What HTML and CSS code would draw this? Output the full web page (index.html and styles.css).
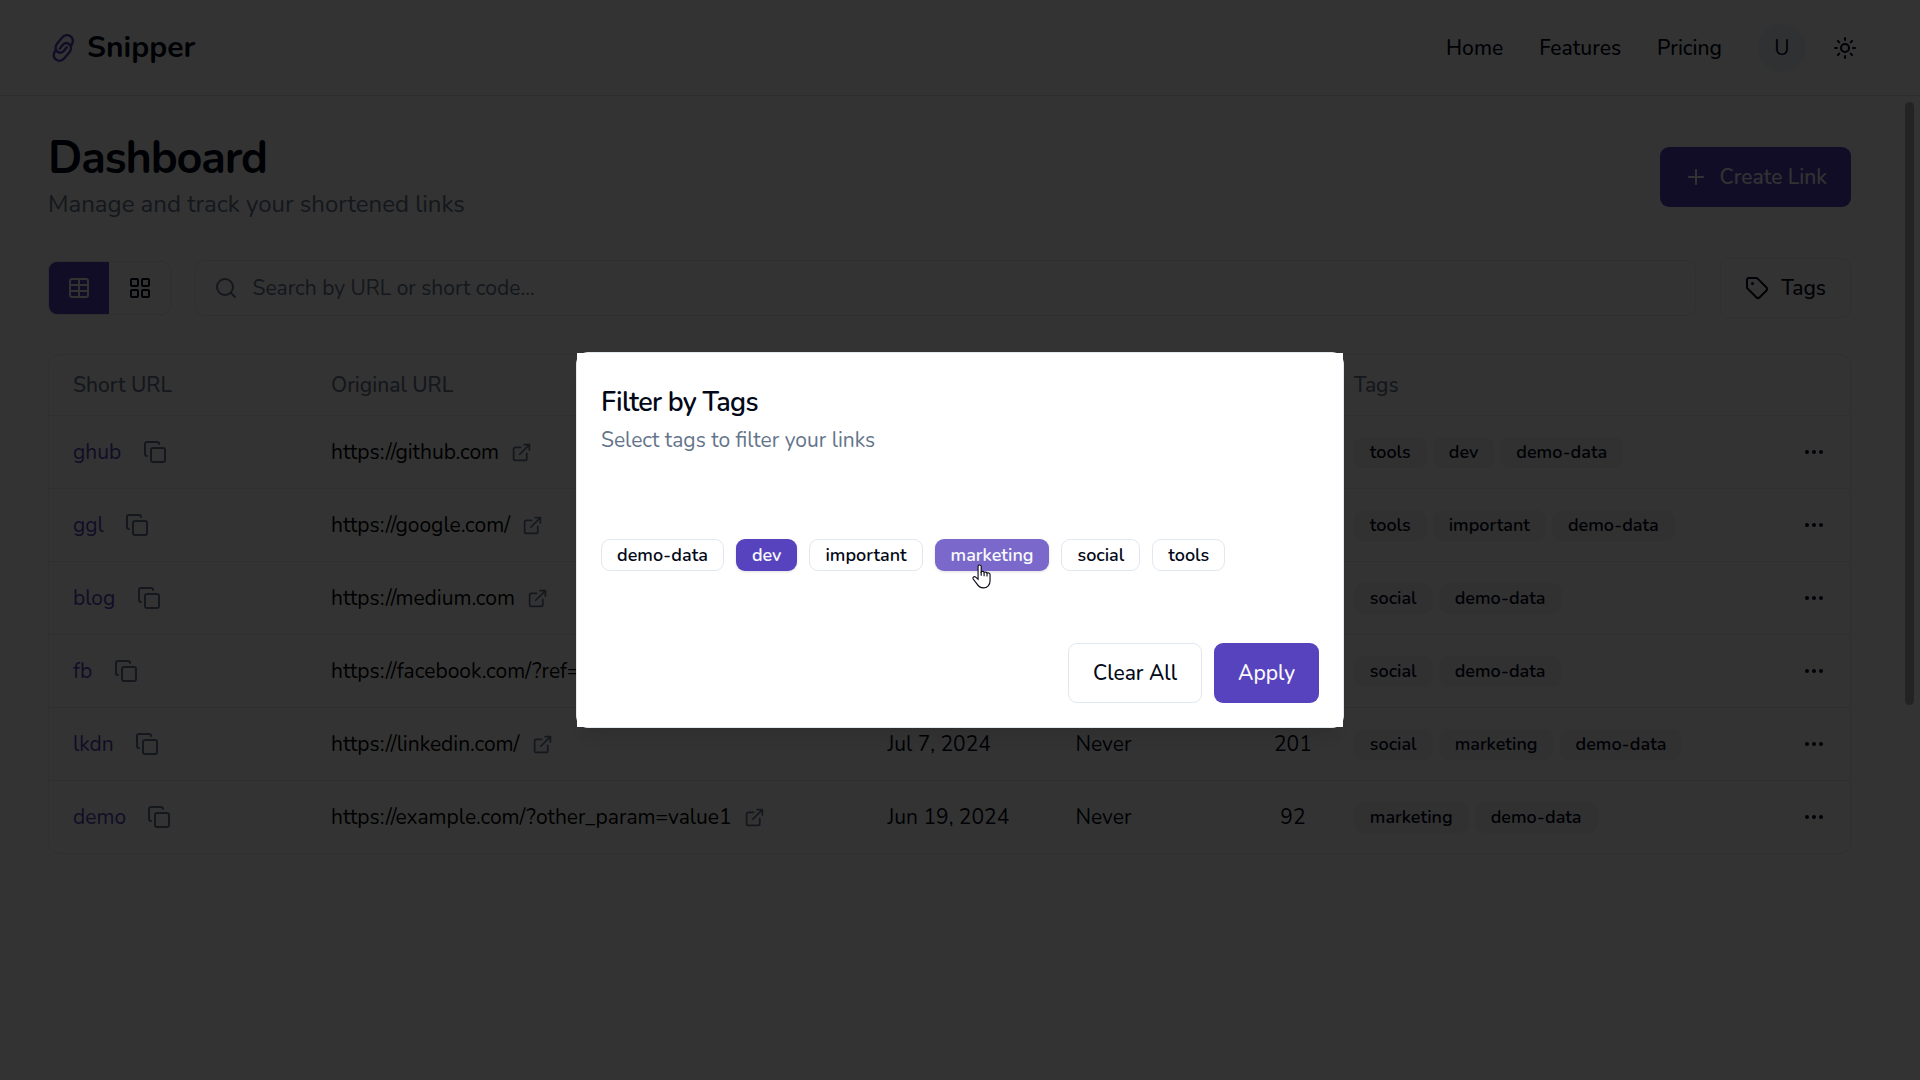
FILE: index.html
```html
<!DOCTYPE html>
<html lang="en">
<head>
<meta charset="utf-8">
<title>Snipper</title>
<link rel="stylesheet" href="styles.css">
</head>
<body>
<svg class="sprite" aria-hidden="true">
  <symbol id="copy" viewBox="0 0 24 24"><rect width="14" height="14" x="8" y="8" rx="2"/><path d="M4 16c-1.1 0-2-.9-2-2V4c0-1.1.9-2 2-2h10c1.1 0 2 .9 2 2"/></symbol>
  <symbol id="external" viewBox="0 0 24 24"><path d="M15 3h6v6M10 14 21 3M18 13v6a2 2 0 0 1-2 2H5a2 2 0 0 1-2-2V8a2 2 0 0 1 2-2h6"/></symbol>
  <symbol id="dots" viewBox="0 0 24 24"><circle cx="12" cy="12" r="1"/><circle cx="19" cy="12" r="1"/><circle cx="5" cy="12" r="1"/></symbol>
</svg>

<header class="topbar">
  <a class="brand">
    <svg class="icon brand-icon" viewBox="0 0 30 30"><path id="ring" d="M23.4 12.2C25.5 8.5 25 5 22.5 3.2C19.800 1.300 16.300 2 14 4.800L9 10.800C6.800 13.500 7.200 17 9.500 18.800C12 20.600 14.500 19.800 16.500 17.300L18.800 14.200"/><use href="#ring" transform="rotate(180 15.3 14.9)"/></svg>
    <span>Snipper</span>
  </a>
  <nav class="nav">
    <a>Home</a><a>Features</a><a>Pricing</a>
    <span class="avatar">U</span>
    <svg class="icon sun" viewBox="0 0 24 24"><circle cx="12" cy="12" r="4"/><path d="M12 2v2M12 20v2M4.93 4.93l1.41 1.41M17.66 17.66l1.41 1.41M2 12h2M20 12h2M6.34 17.66l-1.41 1.41M19.07 4.93l-1.41 1.41"/></svg>
  </nav>
</header>

<main class="page">
  <section class="heading">
    <div>
      <h1>Dashboard</h1>
      <p>Manage and track your shortened links</p>
    </div>
    <button class="btn primary create">
      <svg class="icon" viewBox="0 0 24 24"><path d="M5 12h14M12 5v14"/></svg>Create Link
    </button>
  </section>

  <section class="toolbar">
    <div class="views">
      <span class="view active"><svg class="icon" viewBox="0 0 24 24"><path d="M12 3v18"/><rect width="18" height="18" x="3" y="3" rx="2"/><path d="M3 9h18M3 15h18"/></svg></span>
      <span class="view"><svg class="icon" viewBox="0 0 24 24"><rect width="7" height="7" x="3" y="3" rx="1"/><rect width="7" height="7" x="14" y="3" rx="1"/><rect width="7" height="7" x="14" y="14" rx="1"/><rect width="7" height="7" x="3" y="14" rx="1"/></svg></span>
    </div>
    <div class="search">
      <svg class="icon" viewBox="0 0 24 24"><circle cx="11" cy="11" r="8"/><path d="m21 21-4.3-4.3"/></svg>
      <span>Search by URL or short code...</span>
    </div>
    <button class="btn outline tags-btn">
      <svg class="icon" viewBox="0 0 24 24"><path d="M12.586 2.586A2 2 0 0 0 11.172 2H4a2 2 0 0 0-2 2v7.172a2 2 0 0 0 .586 1.414l8.704 8.704a2.426 2.426 0 0 0 3.42 0l6.58-6.58a2.426 2.426 0 0 0 0-3.42z"/><circle cx="7.5" cy="7.5" r=".5" fill="currentColor"/></svg>Tags
    </button>
  </section>

  <section class="table">
    <div class="row head"><span>Short URL</span><span>Original URL</span><span></span><span></span><span></span><span>Tags</span><span></span></div>
    <div class="row"><span class="short">ghub<svg class="icon"><use href="#copy"/></svg></span><span class="long">https://github.com<svg class="icon ext"><use href="#external"/></svg></span><span></span><span></span><span></span><span class="tags"><b>tools</b><b>dev</b><b>demo-data</b></span><span class="more"><svg class="icon"><use href="#dots"/></svg></span></div>
    <div class="row"><span class="short">ggl<svg class="icon"><use href="#copy"/></svg></span><span class="long">https://google.com/<svg class="icon ext"><use href="#external"/></svg></span><span></span><span></span><span></span><span class="tags"><b>tools</b><b>important</b><b>demo-data</b></span><span class="more"><svg class="icon"><use href="#dots"/></svg></span></div>
    <div class="row"><span class="short">blog<svg class="icon"><use href="#copy"/></svg></span><span class="long">https://medium.com<svg class="icon ext"><use href="#external"/></svg></span><span></span><span></span><span></span><span class="tags"><b>social</b><b>demo-data</b></span><span class="more"><svg class="icon"><use href="#dots"/></svg></span></div>
    <div class="row"><span class="short">fb<svg class="icon"><use href="#copy"/></svg></span><span class="long">https://facebook.com/?ref=</span><span></span><span></span><span></span><span class="tags"><b>social</b><b>demo-data</b></span><span class="more"><svg class="icon"><use href="#dots"/></svg></span></div>
    <div class="row"><span class="short">lkdn<svg class="icon"><use href="#copy"/></svg></span><span class="long">https://linkedin.com/<svg class="icon ext"><use href="#external"/></svg></span><span>Jul 7, 2024</span><span>Never</span><span class="clicks">201</span><span class="tags"><b>social</b><b>marketing</b><b>demo-data</b></span><span class="more"><svg class="icon"><use href="#dots"/></svg></span></div>
    <div class="row"><span class="short">demo<svg class="icon"><use href="#copy"/></svg></span><span class="long">https://example.com/?other_param=value1<svg class="icon ext"><use href="#external"/></svg></span><span>Jun 19, 2024</span><span>Never</span><span class="clicks">92</span><span class="tags"><b>marketing</b><b>demo-data</b></span><span class="more"><svg class="icon"><use href="#dots"/></svg></span></div>
  </section>
</main>
<div class="scrollbar"></div>

<div class="overlay">
  <div class="dialog">
    <div class="dialog-body">
      <h2>Filter by Tags</h2>
      <p>Select tags to filter your links</p>
      <div class="choices">
        <span class="choice">demo-data</span><span class="choice on">dev</span><span class="choice">important</span>
        <span class="choice on hover">marketing<svg class="cursor" viewBox="0 0 18 24"><path d="M5.7 14.6V2.2C5.7.5 8.7.5 8.7 2.2v5.3c.7-.8 2.7-.5 2.8.6.8-.7 2.6-.3 2.8.7 1-.6 2.9-.2 2.9 1.3v6.2c0 3.6-2.5 6.6-6.3 6.6-3.2 0-4.9-1.4-6.3-3.8L1 14.4C.2 12.8 2 11.5 3.4 12.6Z"/><path d="M8.7 7.5v3.8M11.5 8.3v3.4M14.3 9v3"/></svg></span>
        <span class="choice">social</span><span class="choice">tools</span>
      </div>
      <div class="actions"><button class="btn outline">Clear All</button><button class="btn primary">Apply</button></div>
    </div>
  </div>
</div>
</body>
</html>
```
FILE: styles.css
```css
* { box-sizing: border-box; }
body {
  margin: 0; width: 1920px; height: 1080px; overflow: hidden;
  background: #fff; color: #020817;
  font: 400 21px/30px Nunito, Lato, sans-serif;
}
h1, h2, p { margin: 0; }
.sprite { display: none; }
.icon { width: 24px; height: 24px; flex: none; fill: none; stroke: currentColor; stroke-width: 2; stroke-linecap: round; stroke-linejoin: round; }

.topbar { display: flex; justify-content: space-between; align-items: center; height: 96px; padding: 0 63px 0 48px; border-bottom: 1px solid #dbe1ea; }
.brand { display: flex; align-items: center; gap: 9px; font-size: 30px; font-weight: 700; line-height: 42px; }
.brand-icon { width: 30px; height: 30px; color: #5843be; stroke-width: 2.4; overflow: visible; }
.nav { display: flex; align-items: center; gap: 36px; font-weight: 500; }
.avatar { width: 48px; height: 48px; border-radius: 50%; background: #f1f5f9; display: grid; place-items: center; font-weight: 400; }
.sun { margin-left: -9px; }

.page { padding: 36px 69px 0 48px; }
.heading { display: flex; justify-content: space-between; align-items: center; height: 90px; }
h1 { font-size: 45px; line-height: 50px; font-weight: 700; letter-spacing: -.025em; padding-top: 2px; }
.heading p { font-size: 24px; line-height: 36px; color: #64748b; margin-top: 2px; }
.btn { display: flex; align-items: center; height: 60px; padding: 0 24px; border: 0; border-radius: 9px; font: inherit; font-weight: 500; color: inherit; }
.primary { background: #5843be; color: #f8fafc; }
.outline { background: #fff; border: 1px solid #e2e8f0; }
.create { gap: 12px; }

.toolbar { display: flex; align-items: center; gap: 24px; margin-top: 36px; height: 60px; }
.views { display: flex; height: 54px; border: 1px solid #e2e8f0; border-radius: 9px; overflow: hidden; width: 123px; }
.view { flex: 1; display: grid; place-items: center; }
.view.active { flex: none; width: 60px; background: #5843be; color: #f8fafc; }
.search { flex: 1; display: flex; align-items: center; gap: 14.5px; height: 56px; padding-left: 18px; border: 1px solid #e2e8f0; border-radius: 9px; color: #64748b; }
.tags-btn { gap: 12px; }

.table { margin-top: 36px; border: 1px solid #e2e8f0; border-radius: 12px; }
.row { display: grid; grid-template-columns: 258px 556.5px 188px 157.5px 120.8px 400px 1fr; align-items: center; height: 73px; padding: 0 24px; border-bottom: 1px solid #e2e8f0; }
.row:last-child { border-bottom: 0; height: 72px; }
.head { height: 61px; color: #64748b; font-weight: 500; }
.row > span { display: flex; align-items: center; white-space: nowrap; }
.row > .clicks { justify-content: center; padding-right: 1px; }
.short { color: #5843be; gap: 21.3px; }
.short .icon { color: #64748b; }
.long { color: #000; gap: 12px; }
.long .ext { width: 21px; height: 21px; color: #64748b; }
.tags { gap: 6px; }
.tags b { height: 31px; padding: 0 16px; border-radius: 9px; background: #f2f2f8; font-size: 18px; line-height: 31px; font-weight: 600; }
.row > .more { justify-content: flex-end; }

.scrollbar { position: absolute; left: 1905px; top: 102px; width: 9px; height: 603px; border-radius: 5px; background: #b0b0b0; }

.overlay { position: fixed; inset: 0; display: grid; place-items: center; background: rgba(0, 0, 0, .8); }
.dialog { width: 768px; height: 376px; border: 1px solid #e2e8f0; border-radius: 12px; background: #fff; box-shadow: 0 15px 23px -4px rgba(0, 0, 0, .1), 0 6px 9px -6px rgba(0, 0, 0, .1); }
.dialog-body { height: 374px; padding: 36px 24px 24px; display: flex; flex-direction: column; background: #fff; }
h2 { font-size: 27px; line-height: 27px; font-weight: 600; letter-spacing: -.026em; }
.dialog p { color: #64748b; margin-top: 9px; }
.choices { display: flex; gap: 12px; margin-top: 84px; }
.choice { position: relative; height: 32px; padding: 0 15px; border: 1px solid #e2e8f0; border-radius: 9px; font-size: 18px; line-height: 30px; font-weight: 600; }
.choice.on { background: #5843be; border-color: transparent; color: #f8fafc; box-shadow: 0 1px 3px rgba(0, 0, 0, .12); }
.choice.hover { background: #7a69cb; }
.cursor { position: absolute; left: 36px; top: 24px; width: 19px; height: 25px; fill: #fff; stroke: #0b0b1a; stroke-width: 1.1; }
.actions { display: flex; justify-content: flex-end; gap: 12px; margin-top: auto; }
```
